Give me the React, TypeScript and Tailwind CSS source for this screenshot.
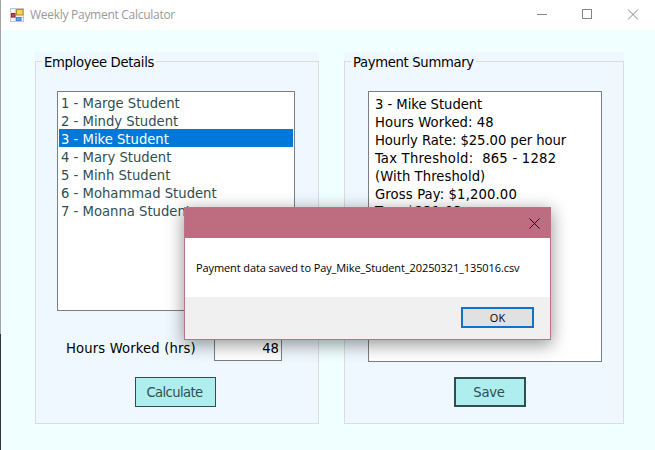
import type { ReactNode } from "react";

const employees = [
  "1 - Marge Student",
  "2 - Mindy Student",
  "3 - Mike Student",
  "4 - Mary Student",
  "5 - Minh Student",
  "6 - Mohammad Student",
  "7 - Moanna Student",
];

const summary = [
  { line: "3 - Mike Student", track: "tracking-[-0.04px]" },
  { line: "Hours Worked: 48", track: "tracking-[0.08px]" },
  { line: "Hourly Rate: $25.00 per hour", track: "tracking-[-0.06px]" },
  { line: "Tax Threshold:  865 - 1282", track: "tracking-[0.23px]" },
  { line: "(With Threshold)", track: "tracking-[0.06px]" },
  { line: "Gross Pay: $1,200.00", track: "tracking-[0.14px]" },
  { line: "Tax: $231.03", track: "tracking-[0.2px]" },
];

function FormIcon() {
  return (
    <svg width="14" height="14" viewBox="0 0 14 14">
      <rect x="0.5" y="0.5" width="13" height="13" fill="#f3f4f6" stroke="#c3c6ca" />
      <path d="M5.5 1v12M1 9.5h12" stroke="#c9ccd2" />
      <rect x="6.5" y="1.5" width="6.5" height="5.5" fill="#f7d552" stroke="#b08f2c" />
      <rect x="1.5" y="5.5" width="3.5" height="3.5" fill="#d8434a" stroke="#8e2833" />
      <rect x="6.5" y="9.5" width="4.5" height="3" fill="#6aa2ee" stroke="#4b7fd0" />
    </svg>
  );
}

function Group({ title, className, children }: { title: string; className: string; children: ReactNode }) {
  return (
    <div className={`h-[372px] bg-[#f0f8ff] ${className}`}>
      <fieldset className="h-full border border-[#dcdcdc]">
        <legend className="ml-[6px] h-[19px] px-[2px] leading-[20px] tracking-[-0.32px] text-black">{title}</legend>
        {children}
      </fieldset>
    </div>
  );
}

export default function App() {
  return (
    <div className="relative flex h-[450px] w-[655px] overflow-hidden bg-[#f0ffff]">
      <div className="flex w-px flex-col">
        <div className="h-[334px] bg-[#a0a4a4]" />
        <div className="flex-1 bg-[#303434]" />
      </div>
      <div className="flex w-[654px] flex-col">
        <header className="flex h-[30px] items-center bg-white pl-[9px] font-['Open_Sans','Noto_Sans',sans-serif] text-[12px] text-[#999]">
          <FormIcon />
          <span className="ml-[6px] whitespace-nowrap tracking-[-0.28px]">Weekly Payment Calculator</span>
          <svg className="ml-auto mr-[14px]" width="104" height="12" viewBox="0 0 104 12" fill="none" stroke="#858585">
            <path d="M0 5.5h10M45.5 0.5h9v9h-9z" shapeRendering="crispEdges" />
            <path d="M91 0.5l10 10M101 0.5l-10 10" />
          </svg>
        </header>

        <main className="flex flex-1 gap-[25px] pl-[34px] pt-[22px] font-['DejaVu_Sans_Condensed','DejaVu_Sans',sans-serif] text-[14.67px] font-stretch-condensed">
          <Group title="Employee Details" className="w-[284px]">
            <ul className="ml-[21px] mt-[20px] h-[220px] w-[238px] border border-[#7a7f83] bg-white p-px">
              {employees.map((name, i) => (
                <li
                  key={name}
                  className={`h-[18px] whitespace-pre pl-[2px] leading-[20px] ${i === 2 ? "bg-[#0078d7] text-white" : "text-[#2f4f4f]"}`}
                >
                  {name}
                </li>
              ))}
            </ul>
            <div className="ml-[30px] mt-[24px] flex h-[26px] items-center text-black">
              <span className="w-[148px] whitespace-nowrap tracking-[0.15px]">Hours Worked (hrs)</span>
              <span className="h-[26px] w-[68px] border border-[#7a7f83] bg-white pr-[2px] text-right leading-[24px]">48</span>
            </div>
            <button className="ml-[99px] mt-[16px] block h-[30px] w-[81px] border border-[#2f4f4f] bg-[#afeeee] pr-[2px] text-[#2f4f4f] tracking-[-0.6px]">
              Calculate
            </button>
          </Group>

          <Group title="Payment Summary" className="w-[280px]">
            <div className="ml-[23px] mt-[20px] h-[271px] w-[234px] border border-[#7a7f83] bg-white pl-[6px] pt-[3px] text-black">
              {summary.map(({ line, track }) => (
                <p key={line} className={`h-[18px] whitespace-pre leading-[18px] last:-mt-px ${track}`}>
                  {line}
                </p>
              ))}
            </div>
            <button className="ml-[109px] mt-[15px] block h-[30px] w-[72px] border-2 border-[#2f4f4f] bg-[#afeeee] pr-[2px] text-[#2f4f4f] tracking-[-0.2px]">
              Save
            </button>
          </Group>
        </main>
      </div>

      <section className="absolute left-[184px] top-[207px] flex h-[133px] w-[367px] flex-col border border-[#bb7285] bg-white font-['Open_Sans','Noto_Sans',sans-serif] text-[11px] text-black shadow-[0_4px_16px_1px_rgba(0,0,0,0.4)]">
        <div className="flex h-[30px] items-center justify-end bg-[#be6d81] pr-[10px]">
          <svg width="11" height="11" viewBox="0 0 11 11" fill="none" stroke="#111">
            <path d="M0.5 0.5l10 10M10.5 0.5l-10 10" />
          </svg>
        </div>
        <p className="h-[59px] whitespace-nowrap pl-[11px] leading-[60px] tracking-[-0.1px]">Payment data saved to Pay_Mike_Student_20250321_135016.csv</p>
        <div className="flex flex-1 justify-end bg-[#f0f0f0] pr-[16px] pt-[10px]">
          <button className="h-[21px] w-[73px] border-2 border-[#0f74c8] bg-[#e1e1e1] leading-[17px]">OK</button>
        </div>
      </section>
    </div>
  );
}
